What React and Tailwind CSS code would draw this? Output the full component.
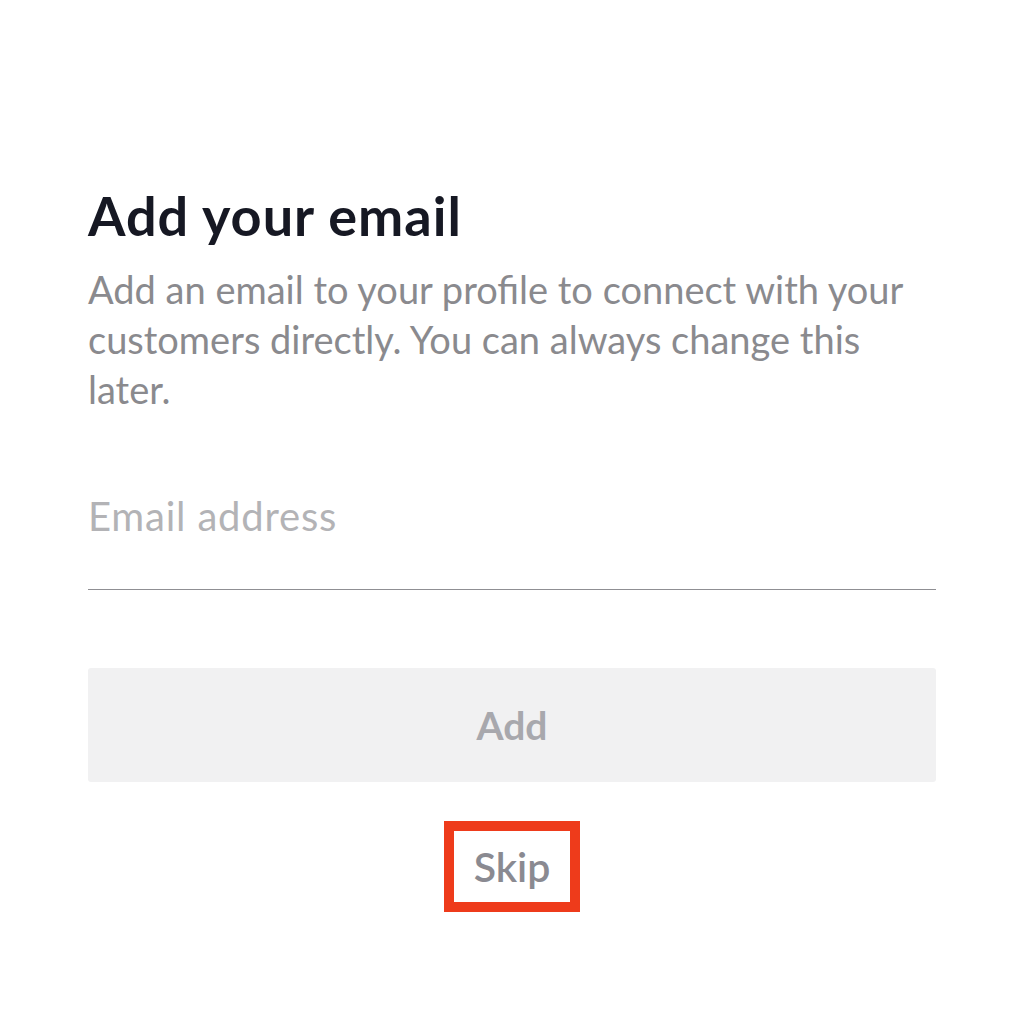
import React, { useState } from "react";

export default function App() {
  const [email, setEmail] = useState("");

  return (
    <div className="min-h-[1015px] w-full bg-white font-['Lato','Liberation_Sans',sans-serif]">
      <main className="px-[88px] pt-[184px]">
        <h1 className="text-[54px] font-bold leading-[64px] tracking-[1px] text-[#161823]">
          Add your email
        </h1>
        <p className="mt-[16px] text-[38px] leading-[50px] text-[#8a8a8e]">
          Add an email to your profile to connect with your
          <br />
          customers directly. You can always change this
          <br />
          later.
        </p>

        <div className="mt-[72px] border-b-[1.5px] border-[#8f8f93]">
          <input
            type="email"
            value={email}
            onChange={(e) => setEmail(e.target.value)}
            placeholder="Email address"
            className="h-[103px] w-full bg-transparent pb-[43px] text-[40px] tracking-[0.8px] text-[#161823] outline-none placeholder:text-[#b3b3b6]"
          />
        </div>

        <button
          type="button"
          className="mt-[78px] flex h-[114px] w-full items-center justify-center rounded-[3px] bg-[#f1f1f2] text-[39px] font-bold text-[#a8a8ad]"
        >
          Add
        </button>

        <div className="mt-[39px] flex justify-center">
          <button
            type="button"
            className="flex h-[91px] w-[136px] items-center justify-center border-[10px] border-[#ee3b1b] text-[41px] font-semibold text-[#8a8a91]"
          >
            Skip
          </button>
        </div>
      </main>
    </div>
  );
}
